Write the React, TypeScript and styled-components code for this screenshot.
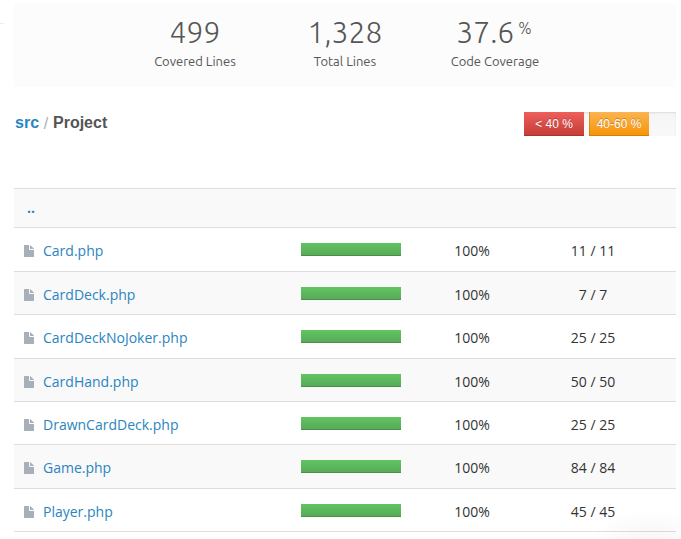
import React from "react";
import styled, { createGlobalStyle } from "styled-components";

const Global = createGlobalStyle`
  * { box-sizing: border-box; }
  html, body { margin: 0; height: 539px; overflow: hidden; background: #fff; }
  body { font-family: "Open Sans", "Noto Sans", sans-serif; color: #333; }
`;

const Page = styled.div`
  position: relative;
  width: 681px;
  height: 539px;
  padding: 3px 5px 0 14px;
  overflow: hidden;
`;

const Stats = styled.section`
  display: flex;
  height: 84px;
  padding-left: 106px;
  background: #fcfcfc;
`;

const Stat = styled.div`
  width: 150px;
  text-align: center;
  font-family: Ubuntu, "Noto Sans", sans-serif;
  color: #555;
`;

const StatValue = styled.div`
  height: 48px;
  padding-top: 9px;
  line-height: 41px;
  font-size: 30px;
  font-weight: 300;
  white-space: nowrap;

  sup {
    margin: 0 2px 0 4px;
    font-size: 16px;
    line-height: 0;
    vertical-align: 9px;
  }
`;

const StatLabel = styled.div`
  line-height: 20px;
  font-size: 13px;
`;

const Toolbar = styled.header`
  display: flex;
  justify-content: space-between;
  height: 101px;
  padding-top: 25px;
`;

const Breadcrumb = styled.nav`
  display: flex;
  gap: 4.75px;
  padding-left: 1px;
  line-height: 21px;
  font-family: "Liberation Sans", Arial, sans-serif;
  font-size: 16px;
  font-weight: 700;
  color: #555;

  a { color: #2a85c0; }
  span { padding-top: 1px; font-weight: 400; color: #a9b0b9; }
`;

const Legend = styled.div`
  display: flex;
  gap: 5px;
  width: 152px;
  height: 24px;
  background: linear-gradient(#f5f5f5, #f9f9f9);
  box-shadow: inset 0 1px 2px rgba(0, 0, 0, 0.1);
`;

const LegendItem = styled.div<{ $from: string; $to: string; $left?: boolean }>`
  width: 60px;
  height: 24px;
  line-height: 24px;
  text-align: center;
  font-family: "Liberation Sans", Arial, sans-serif;
  font-size: 12px;
  color: #fff;
  text-shadow: 0 -1px 0 rgba(0, 0, 0, 0.25);
  background: linear-gradient(${(p) => p.$from}, ${(p) => p.$to});
  box-shadow: inset ${(p) => (p.$left ? 1 : 0)}px -1px 0 rgba(0, 0, 0, 0.15);
`;

const Table = styled.div`
  display: flex;
  flex-direction: column;
  border-top: 1px solid #ddd;
`;

const Row = styled.div<{ $height: number; $shaded?: boolean }>`
  display: grid;
  grid-template-columns: 287px 100px 142px 100px;
  height: ${(p) => p.$height}px;
  border-bottom: 1px solid #ddd;
  background: ${(p) => (p.$shaded ? "#f9f9f9" : "#fff")};
  font-size: 14px;
  line-height: 20px;
`;

const Name = styled.div`
  display: flex;
  padding: 13px 0 0 10px;
  color: #2a85c0;

  svg { margin: 4px 9px 0 0; }
`;

const Parent = styled.a`
  padding: 9px 0 0 13px;
  font-weight: 700;
  color: #2a85c0;
`;

const Bar = styled.div`
  height: 13px;
  margin-top: 15px;
  background: linear-gradient(#62c462, #57a957);
  box-shadow: inset 0 -1px 0 rgba(0, 0, 0, 0.15);
`;

const Value = styled.div`
  padding-top: 13px;
  text-align: center;
`;

const CornerShade = styled.div`
  position: absolute;
  left: 590px;
  top: 508px;
  width: 120px;
  height: 70px;
  background: radial-gradient(closest-side, rgba(0, 0, 0, 0.04), transparent);
`;

const EdgeMark = styled.div`
  position: absolute;
  left: 0;
  top: 23px;
  width: 4px;
  height: 1px;
  background: #eee;
`;

const FileIcon = () => (
  <svg width="10" height="12" viewBox="0 0 10 12" fill="#a7afb9">
    <path d="M.5 0H5v4q0 1 1 1H10v6.500q0 .5-.5.5h-9Q0 12 0 11.500V.5Q0 0 .5 0Z" />
    <path d="M6 0q.4.100.7.400l2.900 2.900q.3.300.4.700H6Z" />
  </svg>
);

const files = [
  { name: "Card.php", lines: "11 / 11", height: 44 },
  { name: "CardDeck.php", lines: "7 / 7", height: 43 },
  { name: "CardDeckNoJoker.php", lines: "25 / 25", height: 44 },
  { name: "CardHand.php", lines: "50 / 50", height: 43 },
  { name: "DrawnCardDeck.php", lines: "25 / 25", height: 43 },
  { name: "Game.php", lines: "84 / 84", height: 44 },
  { name: "Player.php", lines: "45 / 45", height: 43 },
];

export default function App() {
  return (
    <>
      <Global />
      <Page>
        <Stats>
          <Stat>
            <StatValue>499</StatValue>
            <StatLabel>Covered Lines</StatLabel>
          </Stat>
          <Stat>
            <StatValue>1,328</StatValue>
            <StatLabel>Total Lines</StatLabel>
          </Stat>
          <Stat>
            <StatValue>37.6<sup>%</sup></StatValue>
            <StatLabel>Code Coverage</StatLabel>
          </Stat>
        </Stats>
        <Toolbar>
          <Breadcrumb><a>src</a><span>/</span>Project</Breadcrumb>
          <Legend>
            <LegendItem $from="#ee5f5b" $to="#c43c35">&lt; 40 %</LegendItem>
            <LegendItem $from="#fbb450" $to="#f89406" $left>40-60 %</LegendItem>
          </Legend>
        </Toolbar>
        <Table>
          <Row $height={39} $shaded><Parent>..</Parent></Row>
          {files.map((file, i) => (
            <Row key={file.name} $height={file.height} $shaded={i % 2 === 1}>
              <Name><FileIcon />{file.name}</Name>
              <Bar />
              <Value>100%</Value>
              <Value>{file.lines}</Value>
            </Row>
          ))}
        </Table>
        <EdgeMark />
        <CornerShade />
      </Page>
    </>
  );
}
